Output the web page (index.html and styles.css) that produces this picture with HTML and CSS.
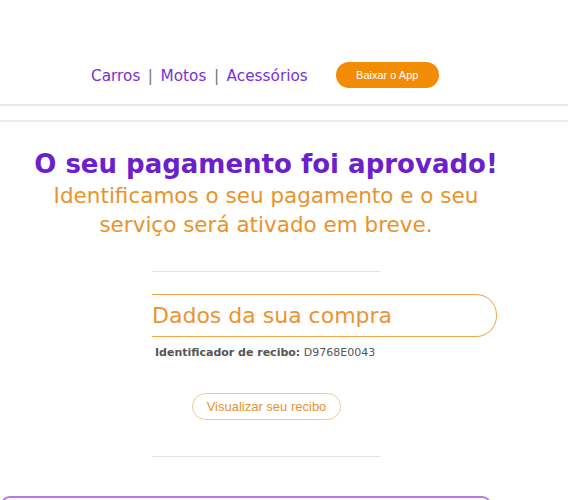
FILE: index.html
```html
<!DOCTYPE html>
<html lang="pt">
<head>
<meta charset="utf-8">
<link rel="stylesheet" href="styles.css">
</head>
<body>
<header class="topbar">
  <nav class="nav">
    <a class="nav-link">Carros</a><span class="sep">|</span><a class="nav-link">Motos</a><span class="sep">|</span><a class="nav-link">Acessórios</a>
  </nav>
  <a class="app-btn">Baixar o App</a>
</header>
<div class="rule"></div>
<main class="content">
  <h1 class="title">O seu pagamento foi aprovado!</h1>
  <p class="subtitle">Identificamos o seu pagamento e o seu serviço será ativado em breve.</p>
  <hr class="divider">
  <section class="purchase">
    <h2 class="purchase-title">Dados da sua compra</h2>
    <p class="receipt-id"><b>Identificador de recibo:</b> D9768E0043</p>
    <a class="receipt-btn">Visualizar seu recibo</a>
  </section>
  <hr class="divider divider-bottom">
  <div class="next-box"></div>
</main>
</body>
</html>
```
FILE: styles.css
```css
html, body {
  margin: 0;
  padding: 0;
  background: #fff;
}
body {
  font-family: "DejaVu Sans", Verdana, sans-serif;
  width: 568px;
  overflow: hidden;
}
.topbar {
  display: flex;
  align-items: center;
  gap: 28px;
  height: 106px;
  padding: 44px 0 0 91px;
  box-sizing: border-box;
  border-bottom: 2px solid #e8e8e8;
}
.nav {
  display: flex;
  align-items: center;
  gap: 7.5px;
  margin-top: 3px;
  font-size: 15.3px;
  color: #7a2fd1;
}
.sep {
  color: #777;
}
.app-btn {
  display: inline-flex;
  align-items: center;
  justify-content: center;
  width: 103px;
  height: 26px;
  margin-top: 1px;
  border-radius: 13px;
  background: #f28c05;
  color: #fff;
  font-family: "Liberation Sans", Arial, sans-serif;
  font-size: 11px;
}
.rule {
  height: 14px;
  border-bottom: 2px solid #ececec;
}
.content {
  width: 532px;
  display: flex;
  flex-direction: column;
  align-items: center;
}
.title {
  margin: 25px 0 0;
  font-size: 26px;
  font-weight: bold;
  color: #6c1fca;
  line-height: 34px;
}
.subtitle {
  margin: 0;
  width: 480px;
  text-align: center;
  font-size: 21.5px;
  line-height: 29px;
  color: #e8932b;
}
.divider {
  width: 228px;
  margin: 32px 0 0;
  border: 0;
  border-top: 1px solid #e3e3e3;
}
.purchase {
  align-self: flex-start;
  margin: 22px 0 0 152px;
  width: 345px;
  display: flex;
  flex-direction: column;
  align-items: flex-start;
}
.purchase-title {
  align-self: stretch;
  margin: 0;
  height: 43px;
  box-sizing: border-box;
  border: 1px solid #f0a64a;
  border-left: 0;
  border-radius: 0 21px 21px 0;
  display: flex;
  align-items: center;
  font-weight: normal;
  font-size: 22px;
  color: #ec9331;
}
.receipt-id {
  margin: 9px 0 0 3px;
  font-size: 11px;
  color: #555;
}
.receipt-btn {
  margin: 34px 0 0 40px;
  width: 149px;
  height: 27px;
  box-sizing: border-box;
  border: 1px solid #f6c78b;
  border-radius: 14px;
  display: flex;
  align-items: center;
  justify-content: center;
  font-family: "Liberation Sans", Arial, sans-serif;
  font-size: 13px;
  color: #e8922b;
}
.divider-bottom {
  margin-top: 36px;
}
.next-box {
  align-self: flex-start;
  width: 492px;
  height: 40px;
  margin-top: 39px;
  box-sizing: border-box;
  border: 2px solid #b67ae0;
  border-radius: 10px;
}
```
